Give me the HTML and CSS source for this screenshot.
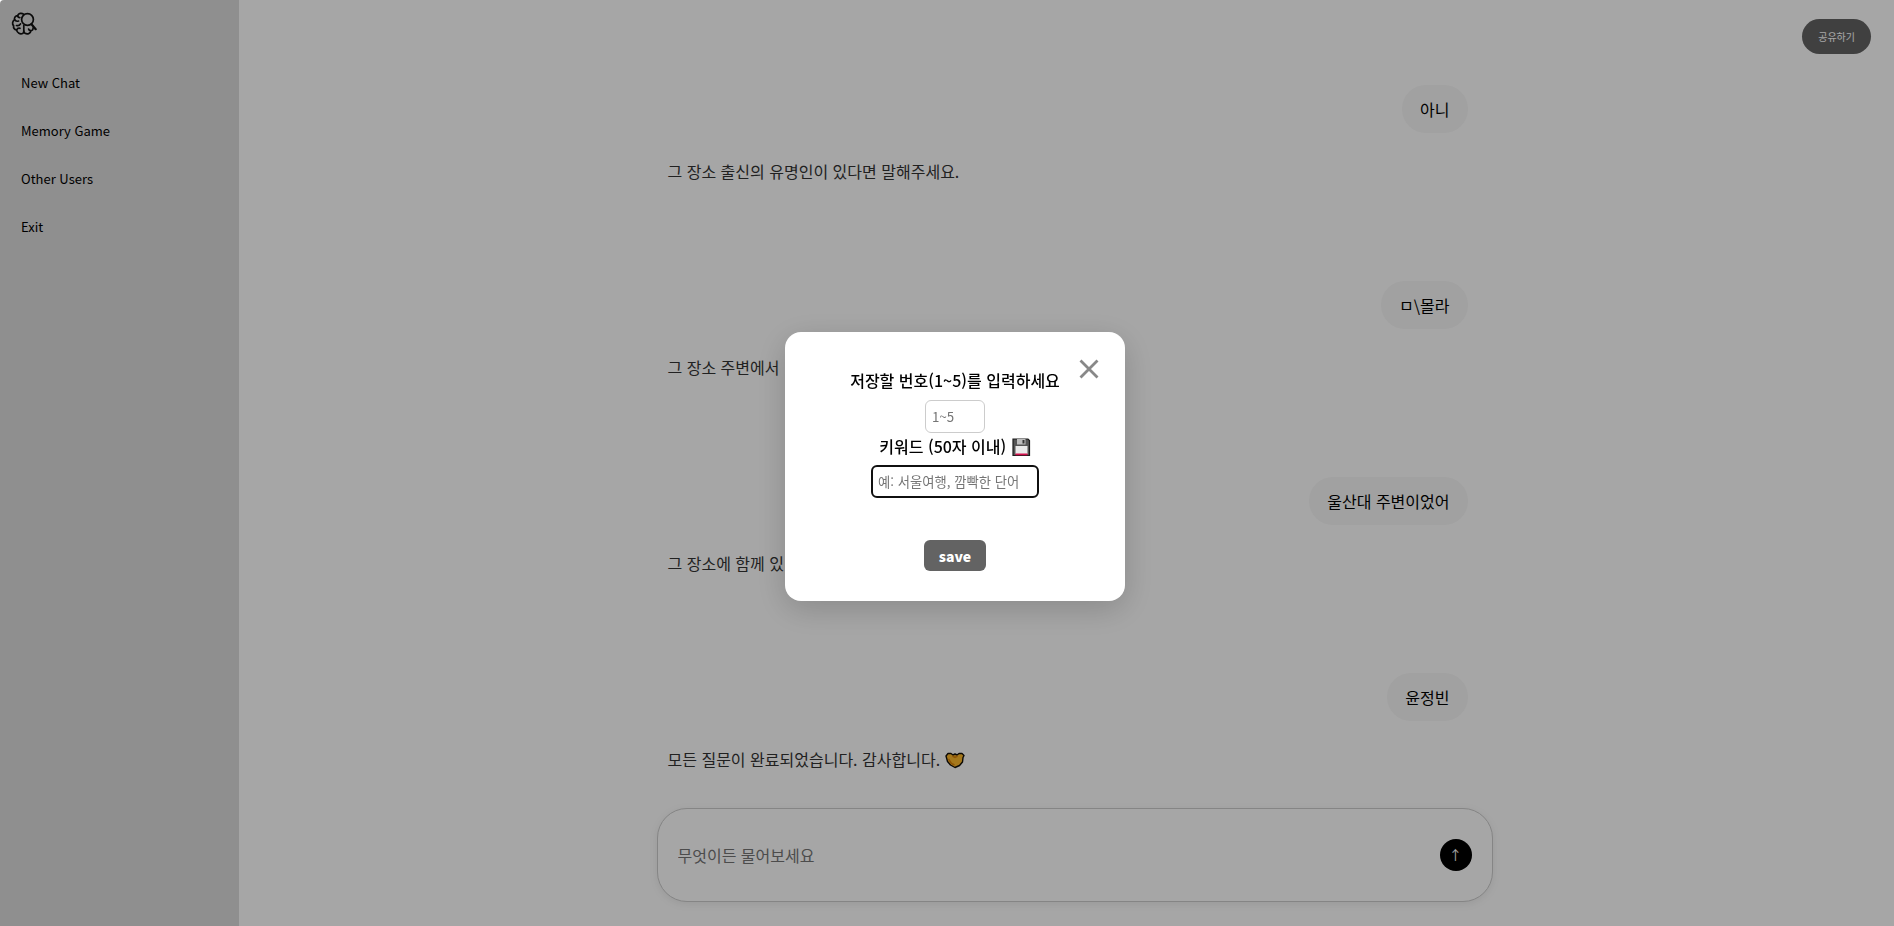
FILE: index.html
```html
<!DOCTYPE html>
<html lang="ko">
<head>
<meta charset="utf-8">
<title>Memory Chat</title>
<link rel="stylesheet" href="styles.css">
</head>
<body>
<div class="app">
  <aside class="sidebar">
    <a class="logo" href="#" aria-label="Home">
      <svg viewBox="0 0 26 26" width="26" height="26" fill="none" stroke="#111" stroke-width="1.700" stroke-linecap="round" stroke-linejoin="round">
        <circle cx="16.500" cy="8.500" r="5.900"/>
        <path d="M20.500 13.200l4.200 5" stroke-width="2.200"/>
        <path d="M12.500 3.200C10.500 1.600 7.500 2.200 6.700 4.600C4.300 4.700 3 6.700 3.600 8.700C1.300 10 1 13 2.600 14.700C2.300 17 3.600 18.700 5.600 19C6 22 9.300 23.800 12 22.200C12.700 21.600 12.800 21 12.800 20V14.500"/>
        <path d="M12.800 20C12.800 21 13 21.800 14 22.300C16.800 23.800 19.600 22.200 20 19.600C21.500 19.300 22.300 18.300 22 17M20 19.600C18.800 19.600 17.800 19 17.600 18"/>
        <path d="M6.700 4.600C6.800 5.800 7.600 6.600 8.800 6.600M3.600 8.700C4.300 10 6 10.500 7.600 10M9.500 12.800C8.700 14.300 7 14.900 5.500 14.500M5.600 19C6.200 17.600 7.500 17 9 17.300"/>
      </svg>
    </a>
    <nav class="menu">
      <a href="#">New Chat</a>
      <a href="#">Memory Game</a>
      <a href="#">Other Users</a>
      <a href="#">Exit</a>
    </nav>
  </aside>
  <main class="main">
    <button class="share" type="button">공유하기</button>
    <section class="chat">
      <div class="turn"><p class="bubble">아니</p><p class="reply">그 장소 출신의 유명인이 있다면 말해주세요.</p></div>
      <div class="turn"><p class="bubble">ㅁ\몰라</p><p class="reply">그 장소 주변에서</p></div>
      <div class="turn"><p class="bubble">울산대 주변이었어</p><p class="reply">그 장소에 함께 있</p></div>
      <div class="turn"><p class="bubble">윤정빈</p><p class="reply">모든 질문이 완료되었습니다. 감사합니다.
        <svg class="emoji" viewBox="0 0 20 20" width="20" height="20" role="img" aria-label="heart hands">
          <path d="M1 6l2-2.500h3l2 1.500 2-1 2 1 2-1.500h3L19 5.500l-1 2 -.500 4.500-3 3.500L10 17.500 5.500 15 2.500 11.500z" fill="#fdb92b" stroke="#15100a" stroke-width="1.400" stroke-linejoin="round"/>
          <path d="M3.500 9l3 4.500 3 1.500" fill="none" stroke="#d9820b" stroke-width="1.500"/>
          <path d="M7.500 6l2.500 1.500 2.500-1.500" fill="none" stroke="#d9820b" stroke-width="1.500"/>
        </svg></p></div>
    </section>
    <form class="composer">
      <input class="composer-input" type="text" aria-label="메시지" placeholder="무엇이든 물어보세요">
      <button class="send" type="button" aria-label="보내기">↑</button>
    </form>
  </main>
</div>
<div class="overlay">
  <form class="modal" role="dialog" aria-modal="true">
    <button class="close" type="button" aria-label="닫기">
      <svg viewBox="0 0 20 20" width="20" height="20" stroke="#888" stroke-width="2.800"><path d="M1.500 1.500l17 17M18.500 1.500l-17 17"/></svg>
    </button>
    <label class="title" for="slot">저장할 번호(1~5)를 입력하세요</label>
    <input class="field slot" id="slot" type="text" placeholder="1~5">
    <label class="title" for="keyword">키워드 (50자 이내)
      <svg class="emoji" viewBox="0 0 20 20" width="20" height="20" role="img" aria-label="floppy disk">
        <path d="M2 2h15l1.500 1.500V18.500H2z" fill="#555" stroke="#1b1b1b" stroke-width="1.200"/>
        <path d="M6 2h8.500v5.500H6z" fill="#bdbdbd"/><path d="M11.500 3h2v3.500h-2z" fill="#333"/>
        <path d="M4.500 9h12v8h-12z" fill="#e9e9e9"/><path d="M4.500 16.500h12v1.800h-12z" fill="#d3104c"/>
      </svg></label>
    <input class="field keyword" id="keyword" type="text" placeholder="예: 서울여행, 깜빡한 단어" autofocus>
    <button class="save" type="button">save</button>
  </form>
</div>
</body>
</html>
```
FILE: styles.css
```css
* { box-sizing: border-box; }
body {
  margin: 0;
  background: #fff;
  color: #000;
  font-family: "Noto Sans CJK KR", "Noto Sans", sans-serif;
  font-size: 16px;
  line-height: 24px;
}
button, input { font-family: inherit; line-height: inherit; }
p { margin: 0; }
.app { display: flex; min-height: 100vh; }
.sidebar {
  width: 239px;
  flex: none;
  padding: 11px;
  background: #dcdcdc;
  border-top-left-radius: 4px;
}
.logo { display: block; height: 26px; }
.menu { display: flex; flex-direction: column; gap: 24px; padding: 34px 10px; }
.menu a { color: #000; font-size: 13px; text-decoration: none; }
.main {
  position: relative;
  flex: 1;
  display: flex;
  flex-direction: column;
  align-items: center;
  padding: 85px 0 24px 16px;
}
.share {
  position: absolute;
  top: 19px;
  right: 23px;
  padding: 6px 16px 5px;
  border: 0;
  border-radius: 18px;
  background: #636363;
  color: #fff;
  font-size: 10px;
}
.chat, .composer { width: 100%; max-width: 836px; }
.chat { display: flex; flex-direction: column; gap: 98px; padding: 0 25px 0 11px; }
.turn { display: flex; flex-direction: column; gap: 26px; }
.bubble {
  align-self: flex-end;
  padding: 12px 18px;
  border-radius: 24px;
  background: #f7f7f7;
}
.reply { color: #333; }
.emoji { display: inline-block; vertical-align: -4px; }
.composer {
  display: flex;
  align-items: center;
  margin-top: auto;
  height: 94px;
  padding: 0 20px;
  border: 1px solid #ccc;
  border-radius: 30px;
  background: #fff;
  box-shadow: 0 2px 8px rgba(0, 0, 0, 0.08);
}
.composer-input { flex: 1; padding: 0; border: 0; outline: 0; background: none; font-size: 16px; }
.composer-input::placeholder, .field::placeholder { color: #757575; }
.send {
  width: 32px;
  height: 32px;
  padding: 0;
  border: 0;
  border-radius: 50%;
  background: #000;
  color: #fff;
}
.overlay {
  position: fixed;
  inset: 0;
  display: flex;
  align-items: center;
  justify-content: center;
  padding: 6px 0 0 16px;
  border-top-left-radius: 4px;
  background: rgba(0, 0, 0, 0.35);
}
.modal {
  position: relative;
  display: flex;
  flex-direction: column;
  align-items: center;
  width: 340px;
  padding: 36px 32px 30px;
  border-radius: 16px;
  background: #fff;
  box-shadow: 0 8px 32px rgba(0, 0, 0, 0.18);
}
.close {
  position: absolute;
  top: 27px;
  right: 26px;
  width: 20px;
  height: 20px;
  padding: 0;
  border: 0;
  background: none;
}
.close svg { display: block; }
.title { font-weight: 500; }
.field {
  height: 33px;
  padding: 0 6px;
  border: 1px solid #ccc;
  border-radius: 6px;
  outline: 0;
  background: #fff;
}
.slot { width: 60px; margin: 8px 0 1px; }
.keyword { width: 168px; margin: 7px 0 42px; }
.keyword:focus { padding: 0 5px; border: 2px solid #101010; }
.save {
  padding: 4px 15px 3px;
  border: 0;
  border-radius: 6px;
  background: #636363;
  color: #fff;
  font-size: 14px;
  font-weight: 900;
}
```
